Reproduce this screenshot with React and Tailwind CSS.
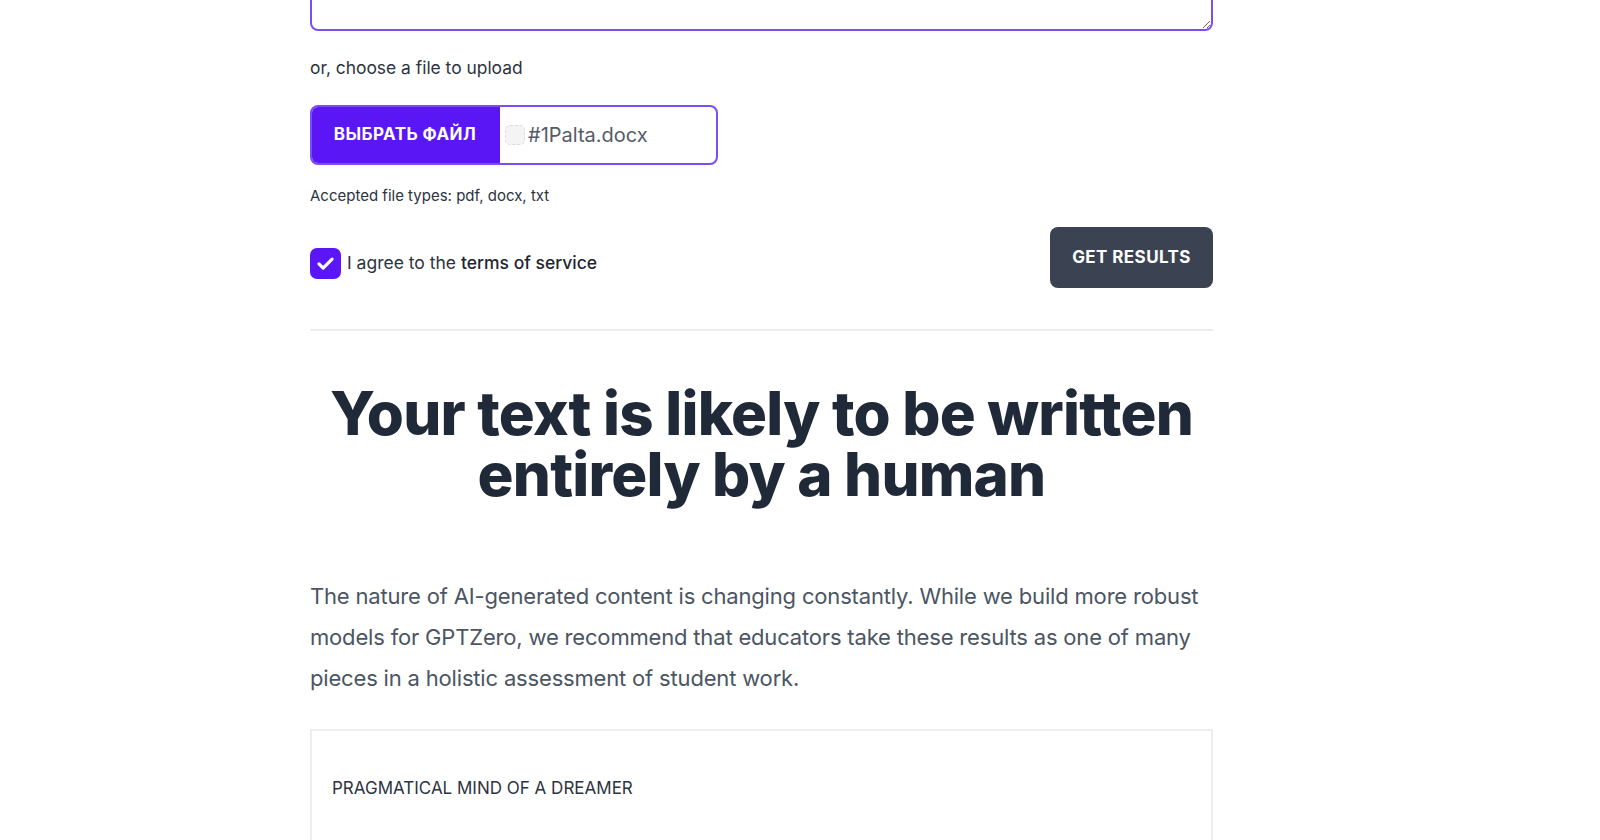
export default function App() {
  return (
    <div className="h-[840px] overflow-hidden bg-white">
      <div className="ml-[310px] w-[903px] font-['Inter',sans-serif]">
        {/* textarea, scrolled mostly out of view */}
        <textarea
          className="block w-full h-[200px] -mt-[169px] rounded-lg border-2 border-[#7b4cf7] outline-none resize-y"
          readOnly
        />

        <p className="mt-[25px] text-[17.4px] leading-6 text-[#2d3340]">or, choose a file to upload</p>

        {/* file input */}
        <div className="mt-[25px] flex h-[60px] w-[408px] rounded-lg border-2 border-[#7b4cf7] overflow-hidden">
          <div className="flex w-[190px] shrink-0 items-center justify-center bg-[#5b16f6] text-[17px] font-bold tracking-wide text-white -m-[2px] mr-0 rounded-l-lg">
            ВЫБРАТЬ ФАЙЛ
          </div>
          <div className="flex items-center gap-[3px] pl-[5px]">
            <span className="block h-[20px] w-[20px] rounded-[5px] border border-dashed border-[#dcdcdc] bg-[#f4f4f4]" />
            <span className="text-[20px] text-[#555b66]">#1Palta.docx</span>
          </div>
        </div>

        <p className="mt-[21px] text-[15px] leading-5 text-[#2d3340]">Accepted file types: pdf, docx, txt</p>

        {/* agree + button */}
        <div className="mt-[21px] flex items-center justify-between">
          <label className="mt-[11px] flex items-center gap-[6px]">
            <span className="flex h-[31px] w-[31px] items-center justify-center rounded-[7px] bg-[#5b16f6]">
              <svg width="21" height="21" viewBox="0 0 24 24" fill="none" stroke="white" strokeWidth="3.6" strokeLinecap="round" strokeLinejoin="round">
                <path d="M4.5 12.5l4.8 4.8L19.5 7" />
              </svg>
            </span>
            <span className="text-[17.5px] text-[#2d3340]">
              I agree to the <span className="font-medium text-[#1f2633]">terms of service</span>
            </span>
          </label>
          <button className="h-[61px] w-[163px] rounded-lg bg-[#3b4352] text-[17px] font-bold tracking-wide text-white">
            GET RESULTS
          </button>
        </div>

        <div className="mt-[41px] h-[2px] bg-[#ececec]" />

        <h1 className="mt-[52px] text-center text-[60px] font-extrabold leading-[61px] tracking-[-0.013em] text-[#1f2937]">
          Your text is likely to be written
          <br />
          entirely by a human
        </h1>

        <p className="mt-[71px] text-[22px] leading-[41px] tracking-[-0.008em] text-[#4b5563]">
          The nature of AI-generated content is changing constantly. While we build more robust models for GPTZero, we
          recommend that educators take these results as one of many pieces in a holistic assessment of student work.
        </p>

        <div className="mt-[30px] h-[200px] border-2 border-[#eeeeee] px-[20px] pt-[45px]">
          <p className="text-[17px] leading-6 text-[#2d3340]">PRAGMATICAL MIND OF A DREAMER</p>
        </div>
      </div>
    </div>
  )
}
